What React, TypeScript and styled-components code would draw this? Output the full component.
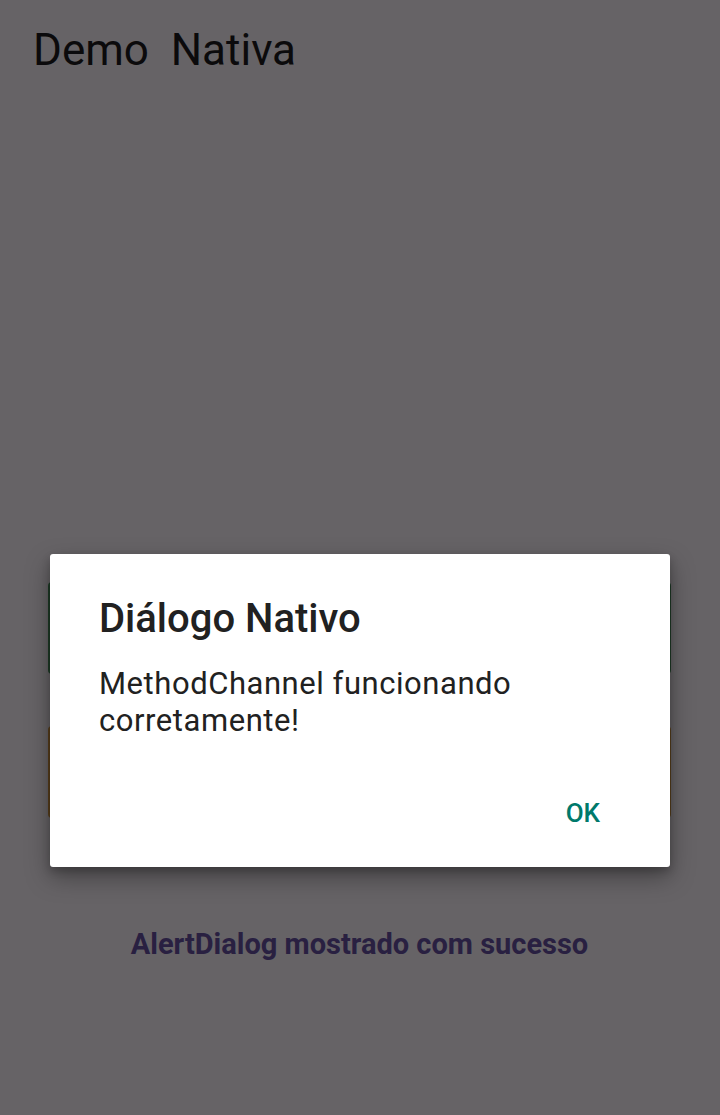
import React from "react";
import styled, { createGlobalStyle } from "styled-components";

const Global = createGlobalStyle`
  html, body { margin: 0; padding: 0; }
  body { font-family: Roboto, "Noto Sans", sans-serif; background: #FEF7FF; }
  #root { min-height: 1115px; }
`;

const Screen = styled.div`
  position: relative;
  width: 720px;
  height: 1115px;
  background: #FEF7FF;
  overflow: hidden;
  display: flex;
  flex-direction: column;
`;

const Title = styled.h1`
  margin: 0;
  padding: 22px 0 0 33px;
  font-family: Roboto, sans-serif;
  font-weight: 400;
  font-size: 44px;
  line-height: 56px;
  color: #1D1B20;
  white-space: pre;
`;

const Content = styled.div`
  display: flex;
  flex-direction: column;
  align-items: center;
  padding: 504px 49px 0 48px;
`;

const ActionButton = styled.div<{ $bg: string }>`
  align-self: stretch;
  height: 92px;
  border-radius: 4px;
  background: ${(p) => p.$bg};
  margin-bottom: 52px;
`;

const Status = styled.p`
  margin: 57px 0 0;
  font-family: Roboto, sans-serif;
  font-weight: 700;
  font-size: 29px;
  line-height: 34px;
  color: #6750A4;
`;

const Scrim = styled.div`
  position: absolute;
  inset: 0;
  background: rgba(0, 0, 0, 0.6);
  display: flex;
  flex-direction: column;
  align-items: center;
  padding-top: 554px;
`;

const Dialog = styled.div`
  width: 620px;
  height: 313px;
  box-sizing: border-box;
  background: #FFFFFF;
  border-radius: 3px;
  box-shadow: 0 10px 24px rgba(0, 0, 0, 0.35), 0 4px 8px rgba(0, 0, 0, 0.2);
  display: flex;
  flex-direction: column;
  padding: 41px 49px 0 49px;
`;

const DialogTitle = styled.h2`
  margin: 0;
  font-family: Roboto, sans-serif;
  font-weight: 500;
  font-size: 40px;
  line-height: 48px;
  color: #212121;
`;

const DialogBody = styled.p`
  margin: 22px 0 0;
  font-family: Roboto, sans-serif;
  font-weight: 400;
  font-size: 31px;
  line-height: 37px;
  letter-spacing: 0.55px;
  color: #212121;
`;

const Actions = styled.div`
  display: flex;
  justify-content: flex-end;
  margin-top: auto;
  padding: 0 21px 38px 0;
`;

const TextButton = styled.button`
  border: none;
  background: transparent;
  padding: 0;
  font-family: Roboto, sans-serif;
  font-weight: 500;
  font-size: 26px;
  line-height: 32px;
  color: #00796B;
  cursor: pointer;
`;

export default function App() {
  return (
    <>
      <Global />
      <Screen>
        <Title>{"Demo  Nativa"}</Title>
        <Content>
          <ActionButton $bg="#4E9A63" />
          <ActionButton $bg="#E0A04A" />
          <Status>AlertDialog mostrado com sucesso</Status>
        </Content>
        <Scrim>
          <Dialog role="dialog">
            <DialogTitle>Diálogo Nativo</DialogTitle>
            <DialogBody>
              MethodChannel funcionando
              <br />
              corretamente!
            </DialogBody>
            <Actions>
              <TextButton>OK</TextButton>
            </Actions>
          </Dialog>
        </Scrim>
      </Screen>
    </>
  );
}
